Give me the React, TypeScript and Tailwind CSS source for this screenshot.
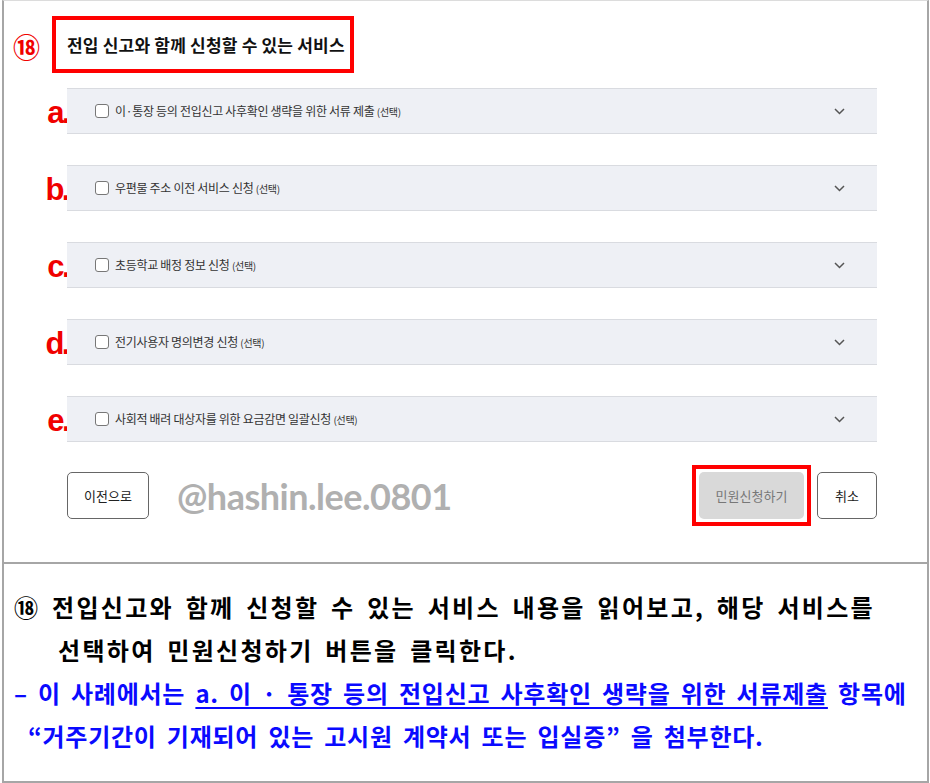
import React from "react"

const KR = "font-['Noto_Sans_CJK_KR','Noto_Sans',sans-serif]"

const services = [
  { key: "a.", label: "이·통장 등의 전입신고 사후확인 생략을 위한 서류 제출" },
  { key: "b.", label: "우편물 주소 이전 서비스 신청" },
  { key: "c.", label: "초등학교 배정 정보 신청" },
  { key: "d.", label: "전기사용자 명의변경 신청" },
  { key: "e.", label: "사회적 배려 대상자를 위한 요금감면 일괄신청" },
]

function Chevron() {
  return (
    <svg width="11" height="7" viewBox="0 0 11 7" fill="none">
      <path d="M1 1l4.5 4.5L10 1" stroke="#555" strokeWidth="1.5" />
    </svg>
  )
}

function ServiceRow({ letter, label }: { letter: string; label: string }) {
  return (
    <div className="flex">
      <div className="w-[63px] flex justify-end items-end">
        <span className="font-['Liberation_Sans',sans-serif] font-bold text-[31px] leading-none text-[#f00000] mb-[6px] -mr-[1px] tracking-[-2.5px]">
          {letter}
        </span>
      </div>
      <div className="w-[810px] h-[46px] bg-[#eef0f5] border-y border-[#d9dbe0] flex items-center pl-[28px] pr-[32px]">
        <span className="w-[14px] h-[14px] rounded-[3px] border-[1.5px] border-[#777] bg-white" />
        <span className="ml-[6px] text-[12px] text-[#333] tracking-[-0.3px]">
          {label} <span className="text-[10px]">(선택)</span>
        </span>
        <span className="ml-auto">
          <Chevron />
        </span>
      </div>
    </div>
  )
}

export default function App() {
  return (
    <div className={`w-[930px] h-[783px] bg-white ${KR}`}>
      <div className="ml-[2px] w-[927px] h-[783px] border-x-2 border-b-2 border-t border-x-[#a6a6a6] border-b-[#a6a6a6] border-t-[#dcdcdc] flex flex-col">
        <section className="h-[563px] border-b-2 border-[#a6a6a6] pt-[15px]">
          <div className="flex items-center">
            <span className="ml-[9px] w-[39px] text-[27px] font-bold text-[#f00000] leading-none mt-[4px]">⑱</span>
            <div className="w-[302px] h-[57px] border-4 border-[#ff0000] flex items-center pl-[11px]">
              <span className="text-[17px] font-bold text-[#111] tracking-[0.2px]">
                전입 신고와 함께 신청할 수 있는 서비스
              </span>
            </div>
          </div>
          <div className="mt-[15px] flex flex-col gap-[31px]">
            {services.map((s) => (
              <ServiceRow key={s.key} letter={s.key} label={s.label} />
            ))}
          </div>
          <div className="mt-[23px] flex items-center pl-[63px] w-[873px]">
            <button className="w-[82px] h-[47px] rounded-[5px] border border-[#666] text-[13px] text-[#222] bg-white">
              이전으로
            </button>
            <span className="ml-[28px] font-['Lato',sans-serif] font-bold text-[36px] text-[#b0b0b0] tracking-[-0.5px] leading-none">
              @hashin.lee.0801
            </span>
            <div className="ml-auto border-4 border-[#ff0000] p-[3px]">
              <div className="w-[105px] h-[47px] rounded-[5px] bg-[#d9d9d9] flex items-center justify-center text-[13px] text-[#777]">
                민원신청하기
              </div>
            </div>
            <button className="ml-[6px] w-[60px] h-[47px] rounded-[5px] border border-[#666] text-[13px] text-[#222] bg-white">
              취소
            </button>
          </div>
        </section>
        <section className="flex-1 pt-[21px] font-bold text-[24px] leading-[43px] [word-spacing:4px]">
          <p className="pl-[10px] text-black tracking-[2.3px]">⑱ 전입신고와 함께 신청할 수 있는 서비스 내용을 읽어보고, 해당 서비스를</p>
          <p className="pl-[54px] text-black tracking-[2.3px]">선택하여 민원신청하기 버튼을 클릭한다.</p>
          <p className="pl-[10px] text-[#0a0aff] tracking-[0.75px]">
            – 이 사례에서는{" "}
            <span className="underline underline-offset-[4px] decoration-[1.5px]">
              a. 이 · 통장 등의 전입신고 사후확인 생략을 위한 서류제출
            </span>{" "}
            항목에
          </p>
          <p className="pl-[24px] text-[#0a0aff] tracking-[0.75px]">“거주기간이 기재되어 있는 고시원 계약서 또는 입실증” 을 첨부한다.</p>
        </section>
      </div>
    </div>
  )
}
